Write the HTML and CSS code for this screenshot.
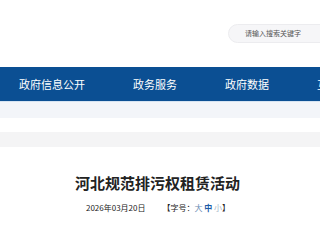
FILE: index.html
```html
<!DOCTYPE html>
<html lang="zh-CN">
<head>
<meta charset="utf-8">
<title>河北规范排污权租赁活动</title>
<link rel="stylesheet" href="styles.css">
</head>
<body>
<header class="top">
  <div class="search">请输入搜索关键字</div>
</header>
<nav class="nav">
  <a class="nav-item">政府信息公开</a>
  <a class="nav-item">政务服务</a>
  <a class="nav-item">政府数据</a>
  <a class="nav-item">互动交流</a>
</nav>
<div class="crumb-band"></div>
<div class="spacer"></div>
<div class="gray-band"></div>
<main class="article">
  <h1 class="title">河北规范排污权租赁活动</h1>
  <div class="meta">
    <span class="date">2026年03月20日</span>
    <span class="size">【字号：<span class="s-big">大</span> <span class="s-mid">中</span> <span class="s-small">小</span>】</span>
  </div>
</main>
</body>
</html>
```
FILE: styles.css
```css
html, body {
  margin: 0;
  padding: 0;
  background: #fff;
  overflow: hidden;
  font-family: "Noto Sans CJK SC", "Noto Sans", sans-serif;
}
.top {
  height: 67px;
  display: flex;
  align-items: flex-start;
  padding-left: 228px;
  box-sizing: border-box;
  overflow: hidden;
}
.search {
  flex: none;
  margin-top: 24px;
  width: 120px;
  height: 19px;
  box-sizing: border-box;
  border: 1px solid #ececef;
  border-radius: 10px;
  background: #f6f6f8;
  padding-left: 16px;
  font-size: 7px;
  line-height: 17px;
  color: #555;
}
.nav {
  height: 34px;
  background: #0b4f93;
  display: flex;
  align-items: center;
  gap: 48px;
  padding-left: 19px;
  white-space: nowrap;
  overflow: hidden;
}
.nav-item {
  flex: none;
  color: #fff;
  font-size: 11px;
  line-height: 14px;
}
.crumb-band {
  height: 16px;
  border-top: 1px solid #d6e4f2;
  background: #f3f5f9;
}
.spacer {
  height: 14px;
}
.gray-band {
  height: 15px;
  background: #f4f4f5;
}
.article {
  padding-top: 26px;
  text-align: center;
}
.title {
  margin: 0;
  font-size: 15px;
  line-height: 20px;
  font-weight: 700;
  color: #222;
  padding-right: 5px;
}
.meta {
  margin-top: 9px;
  display: flex;
  justify-content: center;
  gap: 17px;
  font-size: 8px;
  line-height: 12px;
  color: #222;
  padding-right: 4px;
}
.s-big { color: #6b8cb4; }
.s-mid { color: #1b5ba6; font-weight: 700; }
.s-small { color: #a9b8c9; }
```
